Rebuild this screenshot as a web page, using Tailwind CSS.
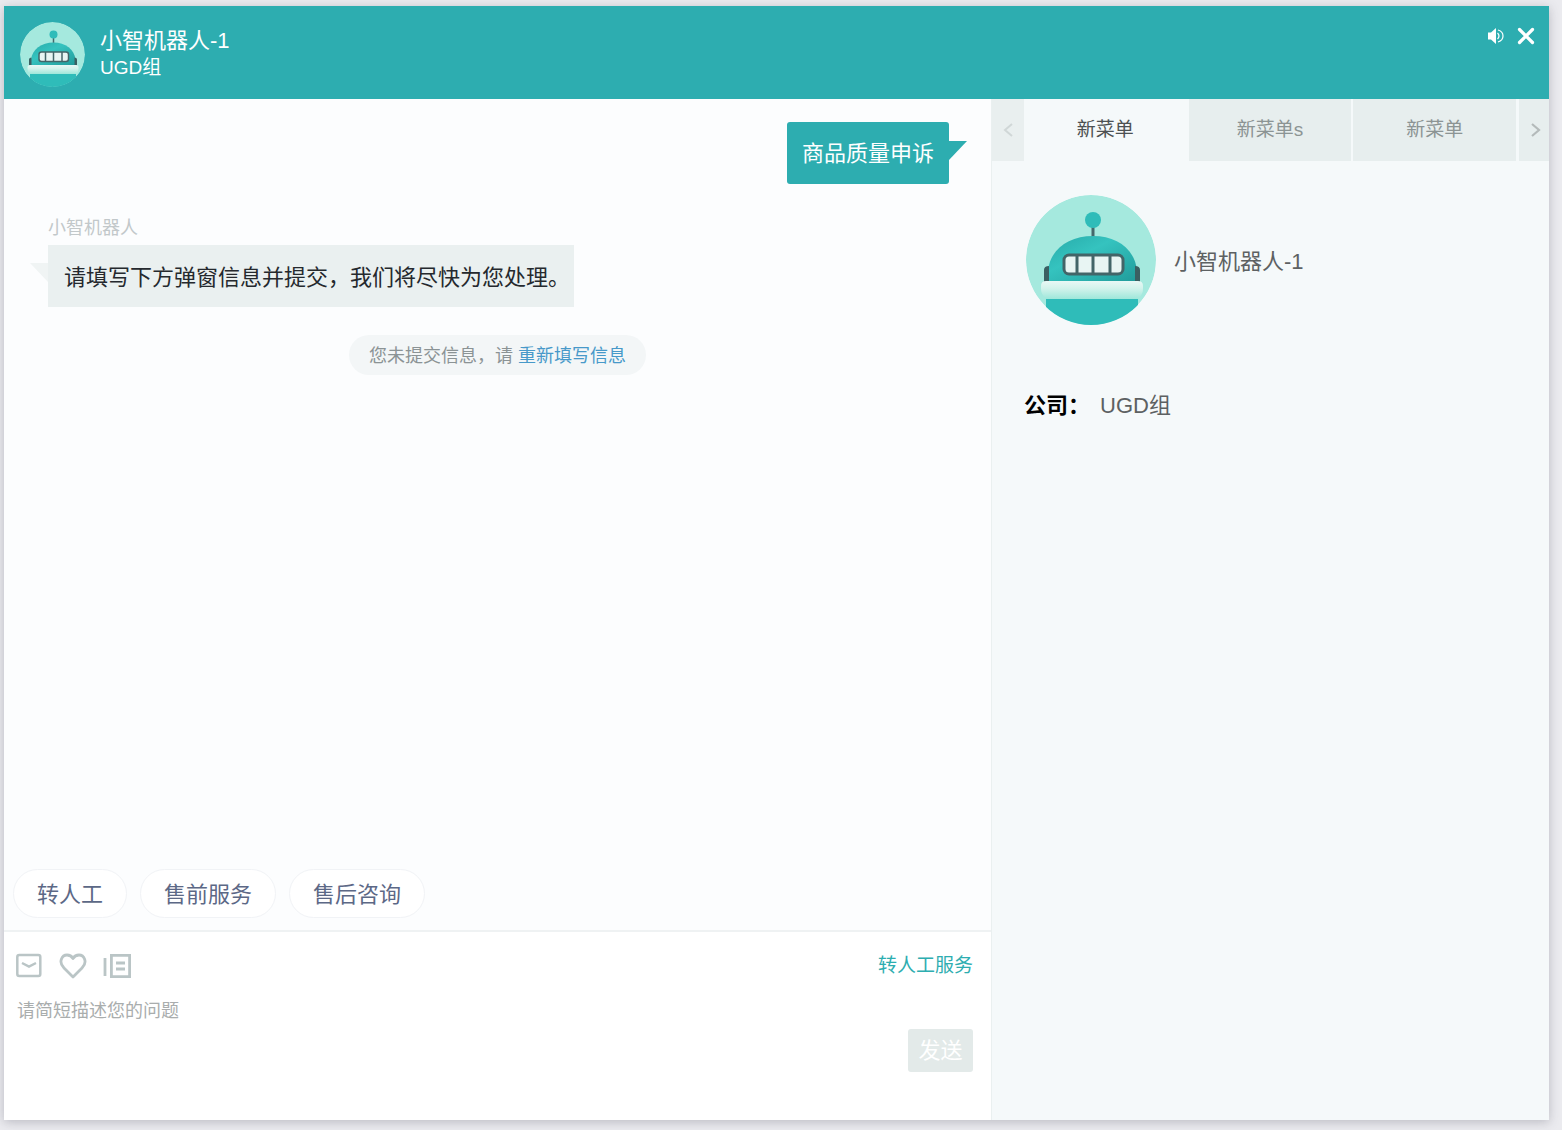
<!DOCTYPE html>
<html lang="zh-CN">
<head>
<meta charset="utf-8">
<title>小智机器人-1</title>
<script src="https://cdn.jsdelivr.net/npm/@tailwindcss/browser@4"></script>
</head>
<body class="flex min-h-screen flex-col bg-[#ebebef] pt-1.5 pr-[13px] pb-2.5 pl-1 font-['Liberation_Sans','Noto_Sans_CJK_SC',sans-serif]">

<!-- Robot artwork shared by both avatars -->
<svg class="absolute h-0 w-0" aria-hidden="true">
  <defs>
    <linearGradient id="dome" x1="0" y1="0" x2="1" y2="1"><stop offset="0" stop-color="#27aaa9"/><stop offset=".4" stop-color="#35c3bf"/><stop offset="1" stop-color="#219c9b"/></linearGradient>
    <linearGradient id="rim" x1="0" y1="0" x2="0" y2="1"><stop offset="0" stop-color="#e9f8f5"/><stop offset=".4" stop-color="#d3f3ec"/><stop offset="1" stop-color="#9ee7da"/></linearGradient>
    <clipPath id="disc"><circle cx="65" cy="65" r="65"/></clipPath>
    <symbol id="robot" viewBox="0 0 130 130">
      <g clip-path="url(#disc)">
        <circle cx="65" cy="65" r="65" fill="#a5e9de"/>
        <path d="M67 30v14" stroke="#44686b" stroke-width="3"/>
        <circle cx="67" cy="25" r="8" fill="#2fbcb9"/>
        <path d="M22 86V76C24 54 43 41 67 41s42 13 44 35v10z" fill="url(#dome)"/>
        <path d="M23 71q-5 0-5 4v12h5zM109 71q5 0 5 4v12h-5z" fill="#3b5f62"/>
        <rect x="38" y="60" width="59" height="19" rx="5" fill="#e8f5f3" stroke="#436568" stroke-width="3"/>
        <path d="M51 60v19M67 60v19M84 60v19" stroke="#436568" stroke-width="3"/>
        <path d="M20 86h92q5 0 5 5v3q0 5-5 10H20q-5-5-5-10v-3q0-5 5-5z" fill="url(#rim)"/>
        <path d="M20 104h92v30H20z" fill="#2fbcb9"/>
      </g>
    </symbol>
  </defs>
</svg>

<div class="flex flex-1 flex-col bg-[#fcfdfe] shadow-[0_2px_10px_rgba(60,60,80,0.28)]">
  <header class="flex h-[93px] items-start bg-[#2dadb0] px-4 pt-4 text-white">
    <svg class="h-[65px] w-[65px]" role="img" aria-label="小智机器人"><use href="#robot"/></svg>
    <div class="flex-1 pt-[5px] pl-[15px]">
      <h1 class="text-[22px] leading-7">小智机器人-1</h1>
      <p class="text-[19px] leading-[26px]">UGD组</p>
    </div>
    <div class="-mr-0.5 flex items-center gap-3 pt-[5px]">
      <button type="button" aria-label="声音">
        <svg class="h-[18px] w-[18px]" viewBox="0 0 18 18" fill="none" stroke="white" stroke-width="1.2"><path d="M1 5.500h3l5-4.500v16l-5-4.500H1z" fill="white" stroke="none"/><path d="M10.500 6q3 3 0 6M11 3q5 1.500 5 6t-5 6"/></svg>
      </button>
      <button type="button" aria-label="关闭">
        <svg class="h-[18px] w-[18px]" viewBox="0 0 18 18" stroke="white" stroke-width="3.200" stroke-linecap="round"><path d="M2.500 2.500l13 13M15.500 2.500l-13 13"/></svg>
      </button>
    </div>
  </header>

  <div class="flex flex-1">
    <main class="flex flex-1 flex-col">
      <section class="flex flex-1 flex-col px-[44px] pt-[23px]">
        <div class="relative -mr-0.5 self-end rounded-[3px] bg-[#2dadb0] px-[15px] pt-4 pb-3.5 text-[22px] leading-8 text-white">
          商品质量申诉
          <svg class="absolute top-[19px] left-full h-[19px] w-[18px]" viewBox="0 0 18 19"><path d="M0 0h18L0 19z" fill="#2dadb0"/></svg>
        </div>
        <p class="mt-[31px] text-lg leading-[26px] text-[#c2c8ca]">小智机器人</p>
        <div class="relative mt-1 self-start bg-[#eaf0f0] pt-[17px] pr-1 pb-[13px] pl-4 text-[22px] leading-8 text-[#25292e]">
          请填写下方弹窗信息并提交，我们将尽快为您处理。
          <svg class="absolute top-[18px] right-full h-[19px] w-[18px]" viewBox="0 0 18 19"><path d="M0 0h18v19z" fill="#f0f4f4"/></svg>
        </div>
        <p class="mt-7 self-center rounded-full bg-[#f3f6f7] px-5 pt-[7px] pb-[5px] text-lg leading-7 text-[#8b9395]">您未提交信息，请 <a href="#" class="text-[#4799c9]">重新填写信息</a></p>
      </section>

      <nav class="flex gap-[13px] px-[9px] pb-3" aria-label="快捷服务">
        <button type="button" class="h-[49px] rounded-full border border-[#f1f3f6] bg-white px-[23px] pt-0.5 text-[22px] text-[#5c6886]">转人工</button>
        <button type="button" class="h-[49px] rounded-full border border-[#f1f3f6] bg-white px-[23px] pt-0.5 text-[22px] text-[#5c6886]">售前服务</button>
        <button type="button" class="h-[49px] rounded-full border border-[#f1f3f6] bg-white px-[23px] pt-0.5 text-[22px] text-[#5c6886]">售后咨询</button>
      </nav>

      <form class="flex h-[190px] flex-col border-t-2 border-[#eff2f3] bg-white pt-5 pr-[18px] pl-[11px]">
        <div class="flex items-center gap-4">
          <button type="button" aria-label="评价"><svg class="h-7 w-7" viewBox="0 0 28 28" fill="none" stroke="#bac5c6" stroke-width="2.500"><rect x="2.300" y="3" width="23" height="21" rx="2"/><path d="M7 11l7 3.500 7-3.500"/></svg></button>
          <button type="button" aria-label="收藏"><svg class="h-7 w-7" viewBox="0 0 28 28" fill="none" stroke="#bac5c6" stroke-width="2.800" stroke-linejoin="round"><path d="M14 25L5 16C-1 10 3 3 8 3q4 0 6 3.500Q16 3 20 3c5 0 9 7 3 13z"/></svg></button>
          <button type="button" aria-label="留言"><svg class="h-7 w-[30px]" viewBox="0 0 30 28" fill="none" stroke="#bac5c6" stroke-width="2.800"><path d="M2 6v18M8.400 3.400h18.200v21.200H8.400zM13 11h9M13 17h9"/></svg></button>
          <a href="#" class="ml-auto text-[19px] leading-7 text-[#2dadb0]">转人工服务</a>
        </div>
        <textarea aria-label="问题描述" placeholder="请简短描述您的问题" class="mt-[17px] h-8 resize-none px-0.5 text-lg leading-7 outline-none placeholder:text-[#a9adad]"></textarea>
        <button type="submit" class="h-[43px] w-[65px] self-end rounded-[3px] bg-[#e3eae9] text-[22px] text-white">发送</button>
      </form>
    </main>

    <aside class="w-[558px] border-l border-[#eaf0f0] bg-[#f5f9fa]">
      <div class="flex h-[62px] text-[19px] text-[#8c9494]">
        <button type="button" aria-label="向前" class="flex w-8 items-center justify-center bg-[#e9efef]"><svg class="h-4 w-3" viewBox="0 0 12 16" fill="none" stroke="#d0d7d7" stroke-width="2"><path d="M10 2L3 8l7 6"/></svg></button>
        <div class="flex flex-1 gap-0.5" role="tablist">
          <button type="button" role="tab" aria-selected="true" class="flex-1 text-[#4d5152]">新菜单</button>
          <button type="button" role="tab" aria-selected="false" class="flex-1 bg-[#e7eeee]">新菜单s</button>
          <button type="button" role="tab" aria-selected="false" class="flex-1 bg-[#e7eeee]">新菜单</button>
        </div>
        <button type="button" aria-label="向后" class="ml-[3px] flex w-[30px] items-center justify-center bg-[#e7eeee] pl-1"><svg class="h-4 w-3" viewBox="0 0 12 16" fill="none" stroke="#b4baba" stroke-width="2.200"><path d="M2 2l7 6-7 6"/></svg></button>
      </div>
      <div class="flex items-center gap-[18px] px-[34px] pt-[34px] text-[22px] text-[#5d6162]">
        <svg class="h-[130px] w-[130px]" role="img" aria-label="小智机器人"><use href="#robot"/></svg>
        <p class="pt-0.5">小智机器人-1</p>
      </div>
      <dl class="flex gap-2.5 px-8 pt-[65px] text-[22px] leading-8">
        <dt class="font-bold text-black">公司：</dt>
        <dd class="text-[#5d6162]">UGD组</dd>
      </dl>
    </aside>
  </div>
</div>
</body>
</html>
